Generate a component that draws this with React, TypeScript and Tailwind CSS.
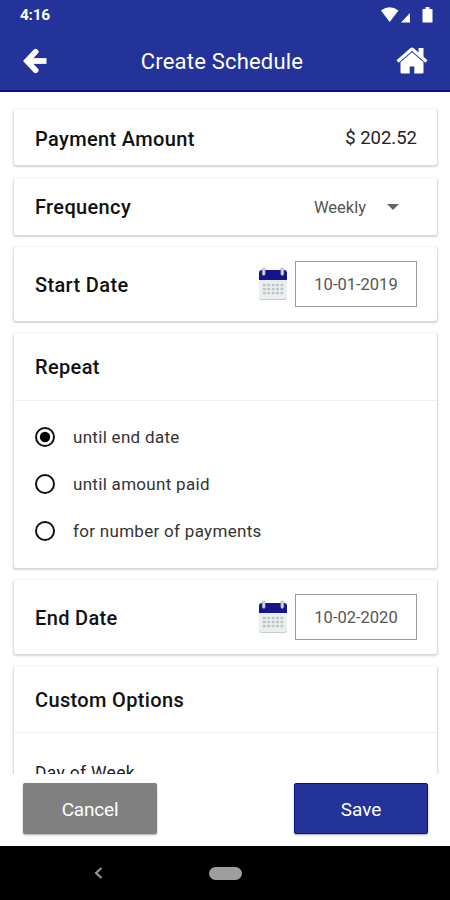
import type { ReactNode } from "react";

function CalendarIcon() {
  const cols = [4.5, 8.9, 13.3, 17.7, 22.1];
  const rows = [16.5, 20.5, 24.5];
  return (
    <svg width="30" height="34" viewBox="0 0 30 34" className="shrink-0">
      <path d="M1 12h28v18a3 3 0 0 1-3 3H4a3 3 0 0 1-3-3z" fill="#c2cece" />
      <path d="M1 12h28v17a3 3 0 0 1-3 3H4a3 3 0 0 1-3-3z" fill="#eaeff0" />
      <path d="M1 13V6a3 3 0 0 1 3-3h22a3 3 0 0 1 3 3v7z" fill="#14148c" />
      {rows.map((y) =>
        cols.map((x) => (
          <rect key={`${x}-${y}`} x={x} y={y} width="3.6" height="3.2" fill="#bcc5c6" stroke="#eef2f3" strokeWidth="0.6" />
        )),
      )}
      <rect x="4.2" y="1" width="3" height="7.5" rx="1.4" fill="#d3d6dc" stroke="#8b8b9f" strokeWidth="0.5" />
      <rect x="22.8" y="1" width="3" height="7.5" rx="1.4" fill="#d3d6dc" stroke="#8b8b9f" strokeWidth="0.5" />
    </svg>
  );
}

function Card({ className, children }: { className: string; children: ReactNode }) {
  return (
    <section
      className={`shrink-0 rounded-[2px] bg-white shadow-[0_1px_2px_1px_rgba(0,0,0,0.17)] ${className}`}
    >
      {children}
    </section>
  );
}

function Title({ children }: { children: ReactNode }) {
  return <h2 className="text-[20px] leading-6 font-medium tracking-[0.35px] text-[#111]">{children}</h2>;
}

function DateCard({ title, date }: { title: string; date: string }) {
  return (
    <Card className="flex h-[74px] items-center pr-5 pl-[21px]">
      <div className="pt-px">
        <Title>{title}</Title>
      </div>
      <div className="ml-auto flex items-center gap-[7px]">
        <CalendarIcon />
        <div className="flex h-[46px] w-[122px] items-center justify-center border border-[#9a9a9a] pt-[3px] text-[16.5px] text-[#555]">
          {date}
        </div>
      </div>
    </Card>
  );
}

function Option({ label, checked = false }: { label: string; checked?: boolean }) {
  return (
    <div className="flex h-[47px] items-center gap-[18px]">
      <svg width="20" height="20" viewBox="0 0 20 20">
        <circle cx="10" cy="10" r="9" fill="none" stroke="#111" strokeWidth="2" />
        {checked && <circle cx="10" cy="10" r="5.2" fill="#000" />}
      </svg>
      <span className="text-[17px] leading-5 tracking-[0.3px] text-[#333]">{label}</span>
    </div>
  );
}

export default function App() {
  return (
    <div className="flex h-[900px] w-[450px] flex-col overflow-hidden bg-white font-[Roboto,sans-serif]">
      <header className="h-[92px] shrink-0 border-b-2 border-[#0c0c8c] bg-[#233399] text-white">
        <div className="flex h-[30px] items-center justify-between pr-4 pl-5">
          <span className="text-[15.5px] leading-5 font-bold tracking-[-0.3px]">4:16</span>
          <svg width="54" height="18" viewBox="0 0 54 18" fill="#fff">
            <path d="M1 4.500Q9.500-2.200 18.500 4.500L9.700 16z" />
            <path d="M30 7v9.500h-9z" />
            <path d="M43 3h2.500V1h4v2h2.500q.5 0 .5.5v12.500q0 .5-.5.5h-9q-.5 0-.5-.5v-12.500q0-.5.5-.5z" />
          </svg>
        </div>
        <div className="flex h-[62px] items-center justify-between pr-[22px] pl-[23px]">
          <svg width="25" height="26" viewBox="0 0 25 26" fill="none" stroke="#fff" strokeWidth="5.600">
            <path d="M12.700 3.700 3.900 13l8.800 9.300" strokeLinecap="round" />
            <path d="M4 13h19.500" strokeWidth="5.800" />
          </svg>
          <h1 className="mt-0.5 text-[22px] leading-7 tracking-[0.2px]">Create Schedule</h1>
          <svg width="32" height="28" viewBox="0 0 32 28" fill="#fff">
            <path d="M16 .5 Q15 .5 14.200 1.200L.5 13.300 2.600 15.700 16 4 29.400 15.700l2.100-2.400L27.500 9.800V1h-5v4.400l-4.700-4.200Q17 .5 16 .5z" />
            <path d="M16 5.200 4.500 15.300v9.900q0 1.300 1.300 1.300h7.900v-7h4.600v7h7.900q1.300 0 1.300-1.300v-9.900z" />
          </svg>
        </div>
      </header>

      <main className="flex h-[682px] shrink-0 flex-col gap-3 overflow-hidden pt-[17px] pr-[13px] pl-[14px]">
        <Card className="flex h-[56px] items-center justify-between pr-5 pl-[21px]">
          <div className="pt-[3px]">
            <Title>Payment Amount</Title>
          </div>
          <span className="pt-1 text-[18.5px] text-[#222]">$ 202.52</span>
        </Card>
        <Card className="mt-px flex h-[57px] items-center justify-between pr-[38px] pl-[21px]">
          <Title>Frequency</Title>
          <div className="flex items-center gap-[21px]">
            <span className="pt-[3px] text-[16.5px] text-[#555]">Weekly</span>
            <svg width="12" height="6" viewBox="0 0 12 6">
              <path d="M0 0h12L6 6z" fill="#666" />
            </svg>
          </div>
        </Card>
        <DateCard title="Start Date" date="10-01-2019" />
        <Card className="h-[235px]">
          <div className="flex h-[68px] items-center border-b border-[#f0f0f0] pl-[21px]">
            <Title>Repeat</Title>
          </div>
          <div className="pt-[12px] pl-[21px]">
            <Option label="until end date" checked />
            <Option label="until amount paid" />
            <Option label="for number of payments" />
          </div>
        </Card>
        <DateCard title="End Date" date="10-02-2020" />
        <Card className="h-[235px]">
          <div className="flex h-[67px] items-center border-b border-[#f0f0f0] pt-0.5 pl-[21px]">
            <Title>Custom Options</Title>
          </div>
          <div className="pt-[28px] pl-[21px] text-[17.5px] leading-6 tracking-[0.3px] text-[#222]">Day of Week</div>
        </Card>
      </main>

      <footer className="flex h-[72px] shrink-0 justify-between pt-[9px] pr-[22px] pl-[23px] text-[19px] text-white">
        <button className="h-[51px] w-[134px] rounded-[2px] bg-[#808080] pt-[3px] tracking-[-0.2px] shadow-[0_1px_2px_rgba(0,0,0,0.35)]">
          Cancel
        </button>
        <button className="h-[51px] w-[134px] rounded-[2px] border border-[#10108a] bg-[#233399] pt-[3px] shadow-[0_1px_2px_rgba(0,0,0,0.35)]">
          Save
        </button>
      </footer>

      <nav className="flex h-[54px] shrink-0 items-center bg-black pl-[94px]">
        <svg width="9" height="12" viewBox="0 0 9 12" fill="none" stroke="#999" strokeWidth="2">
          <path d="M7.500 1 2 6l5.500 5" />
        </svg>
        <div className="ml-[106px] h-[13px] w-[33px] rounded-full bg-[#9e9e9e]" />
      </nav>
    </div>
  );
}
